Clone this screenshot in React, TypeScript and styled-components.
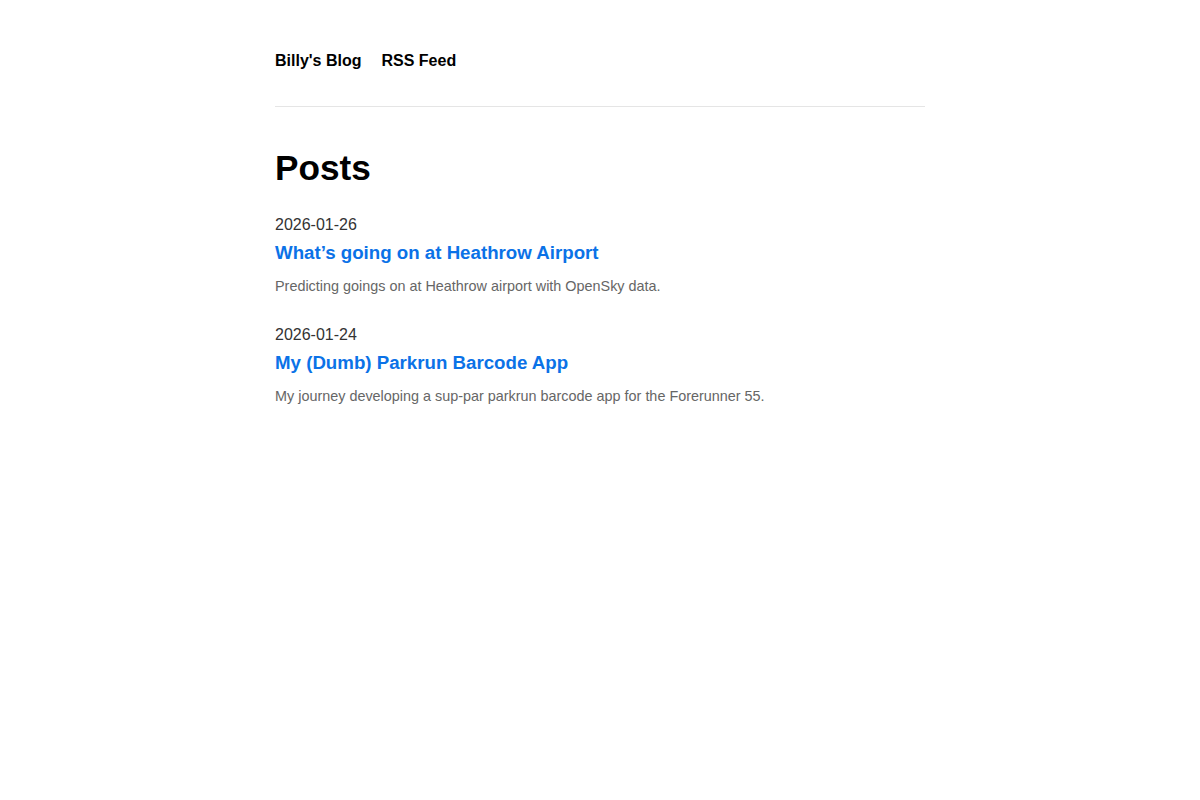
import styled, { createGlobalStyle } from "styled-components"

const GlobalStyle = createGlobalStyle`
    body {
        margin: 0;
        background: #fff;
        font-family: "Liberation Sans", Arial, sans-serif;
        color: #000;
    }
`;

const posts = [
    {
        date: "2026-01-26",
        title: "What’s going on at Heathrow Airport",
        summary: "Predicting goings on at Heathrow airport with OpenSky data.",
    },
    {
        date: "2026-01-24",
        title: "My (Dumb) Parkrun Barcode App",
        summary: "My journey developing a sup-par parkrun barcode app for the Forerunner 55.",
    },
];

export const App = () => {
    return (
        <>
            <GlobalStyle />
            <SPage>
                <SNav>
                    <SNavLink href="#">Billy's Blog</SNavLink>
                    <SNavLink href="#">RSS Feed</SNavLink>
                </SNav>
                <SMain>
                    <SPageTitle>Posts</SPageTitle>
                    <SPostList>
                        {posts.map((post, index) => (
                            <SPost key={index}>
                                <SDate>{post.date}</SDate>
                                <SPostTitle href="#">{post.title}</SPostTitle>
                                <SSummary>{post.summary}</SSummary>
                            </SPost>
                        ))}
                    </SPostList>
                </SMain>
            </SPage>
        </>
    )
}

export default App

const SPage = styled.div`
    max-width: 650px;
    margin: 0 auto;
    padding-top: 51px;
`;

const SNav = styled.nav`
    display: flex;
    gap: 20px;
    padding-bottom: 35px;
    border-bottom: 1px solid #e5e5e5;
`;

const SNavLink = styled.a`
    font-size: 16px;
    font-weight: bold;
    color: #000;
    text-decoration: none;
    line-height: 20px;
`;

const SMain = styled.main`
    padding-top: 39px;
`;

const SPageTitle = styled.h1`
    margin: 0;
    font-size: 35.2px;
    line-height: 44px;
    font-weight: bold;
`;

const SPostList = styled.div`
    margin-top: 25px;
    display: flex;
    flex-direction: column;
    gap: 29px;
`;

const SPost = styled.article`
    display: flex;
    flex-direction: column;
`;

const SDate = styled.div`
    font-size: 16px;
    line-height: 20px;
    color: #333;
`;

const SPostTitle = styled.a`
    margin-top: 7px;
    font-size: 18.7px;
    line-height: 22px;
    font-weight: bold;
    color: #0b72e7;
    text-decoration: none;
`;

const SSummary = styled.p`
    margin: 12px 0 0;
    font-size: 14.4px;
    line-height: 20px;
    color: #666;
`;
